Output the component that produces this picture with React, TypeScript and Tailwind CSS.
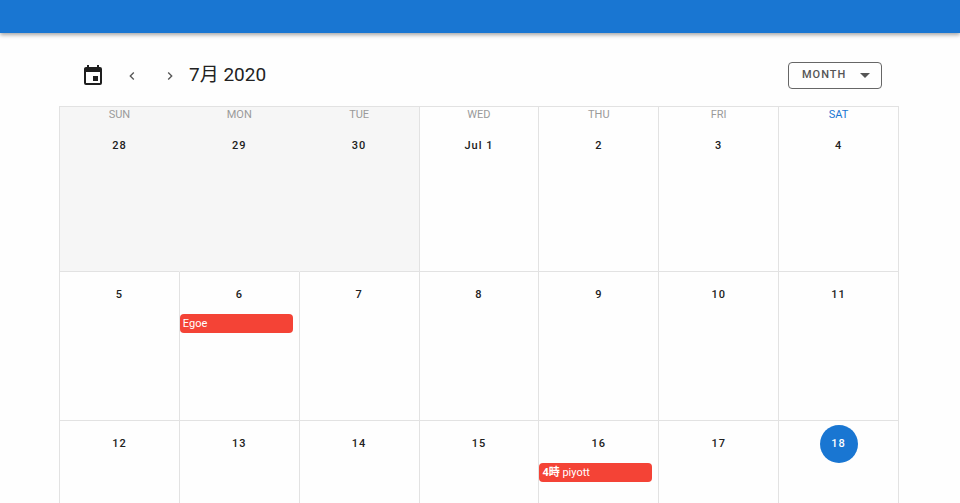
import clsx from 'clsx'

const weekdays = ['Sun', 'Mon', 'Tue', 'Wed', 'Thu', 'Fri', 'Sat']

type CalendarEvent = { name: string; time?: string }

type Day = {
  label: string
  outside?: boolean
  today?: boolean
  event?: CalendarEvent
}

const weeks: Day[][] = [
  [
    { label: '28', outside: true },
    { label: '29', outside: true },
    { label: '30', outside: true },
    { label: 'Jul 1' },
    { label: '2' },
    { label: '3' },
    { label: '4' },
  ],
  [
    { label: '5' },
    { label: '6', event: { name: 'Egoe' } },
    { label: '7' },
    { label: '8' },
    { label: '9' },
    { label: '10' },
    { label: '11' },
  ],
  [
    { label: '12' },
    { label: '13' },
    { label: '14' },
    { label: '15' },
    { label: '16', event: { name: 'piyott', time: '4時' } },
    { label: '17' },
    { label: '18', today: true },
  ],
]

// neighbouring days of another month share one grey block, without lines in between
function columnBorder(index: number) {
  const merged = weeks[0][index].outside && weeks[0][index + 1]?.outside
  return merged ? 'border-r-[#f6f6f6]' : 'border-r-[#e2e2e2]'
}

function Icon({ path, className }: { path: string; className?: string }) {
  return (
    <svg viewBox="0 0 24 24" fill="currentColor" className={className} aria-hidden="true">
      <path d={path} />
    </svg>
  )
}

function Toolbar() {
  return (
    <div className="flex h-[61px] items-center pr-[18px] pl-[21px]">
      <button aria-label="Today" className="text-[#1e1e1e]">
        <Icon
          className="size-6"
          path="M19 3h-1V1h-2v2H8V1H6v2H5c-1.11 0-2 .9-2 2v14a2 2 0 0 0 2 2h14a2 2 0 0 0 2-2V5a2 2 0 0 0-2-2m0 16H5V8h14v11m-7-7v5h5v-5h-5z"
        />
      </button>
      <button aria-label="Previous month" className="ml-4 flex size-[22px] items-center justify-center text-[#555]">
        <Icon className="size-4" path="M15.41 16.58L10.83 12l4.58-4.59L14 6l-6 6 6 6 1.41-1.42z" />
      </button>
      <button aria-label="Next month" className="ml-4 flex size-[22px] items-center justify-center text-[#555]">
        <Icon className="size-4" path="M8.59 16.58L13.17 12 8.59 7.41 10 6l6 6-6 6-1.41-1.42z" />
      </button>
      <h1 className="ml-2 text-[19px] text-[#222]">7月 2020</h1>
      <div className="relative ml-auto text-[#555]">
        <select
          aria-label="Calendar view"
          className="block h-[27px] w-[94px] appearance-none rounded border border-[#666] bg-transparent pl-[13px] text-[11px] font-medium tracking-[1px] uppercase"
        >
          <option>Month</option>
          <option>Week</option>
          <option>Day</option>
        </select>
        <svg
          viewBox="0 0 10 5"
          fill="currentColor"
          aria-hidden="true"
          className="pointer-events-none absolute top-[11px] right-3 h-[5px] w-[10px]"
        >
          <path d="M0 0h10L5 5z" />
        </svg>
      </div>
    </div>
  )
}

function EventChip({ event }: { event: CalendarEvent }) {
  return (
    <button className="block h-[19px] w-[95%] truncate rounded bg-[#f44336] pl-[3px] text-left text-[11px] leading-[18px] text-white">
      {event.time && <strong>{event.time} </strong>}
      {event.name}
    </button>
  )
}

function DayCell({ day, border }: { day: Day; border: string }) {
  return (
    <td
      className={clsx(
        'h-[149px] border-r border-b border-b-[#e2e2e2] p-0 pt-1 align-top',
        border,
        day.outside && 'bg-[#f6f6f6]',
      )}
    >
      <button
        className={clsx(
          'mx-auto block h-[38px] min-w-[38px] rounded-full text-[11px] font-medium tracking-[1px]',
          day.today ? 'bg-[#1976d2] text-white' : 'text-[#212121]',
        )}
      >
        {day.label}
      </button>
      {day.event && <EventChip event={day.event} />}
    </td>
  )
}

export default function App() {
  return (
    <div className="h-screen overflow-hidden bg-[#fefefe] font-[Roboto,'Noto_Sans_CJK_JP',sans-serif]">
      <header className="h-[33px] bg-[#1976d2] shadow-[0_2px_4px_rgba(0,0,0,0.35)]" />
      <main className="px-[60px] pt-3">
        <Toolbar />
        <table className="-ml-px w-full table-fixed border-separate border-spacing-0 border-t border-l border-[#e2e2e2]">
          <thead>
            <tr>
              {weekdays.map((name, i) => (
                <th
                  key={name}
                  className={clsx(
                    'h-4 border-r p-0 align-top text-[11px] leading-[15px] font-normal uppercase',
                    columnBorder(i),
                    weeks[0][i].outside && 'bg-[#f6f6f6]',
                    name === 'Sat' ? 'text-[#1976d2]' : 'text-[#9a9a9a]',
                  )}
                >
                  {name}
                </th>
              ))}
            </tr>
          </thead>
          <tbody>
            {weeks.map((week, row) => (
              <tr key={week[0].label}>
                {week.map((day, i) => (
                  <DayCell key={day.label} day={day} border={row === 0 ? columnBorder(i) : 'border-r-[#e2e2e2]'} />
                ))}
              </tr>
            ))}
          </tbody>
        </table>
      </main>
    </div>
  )
}
